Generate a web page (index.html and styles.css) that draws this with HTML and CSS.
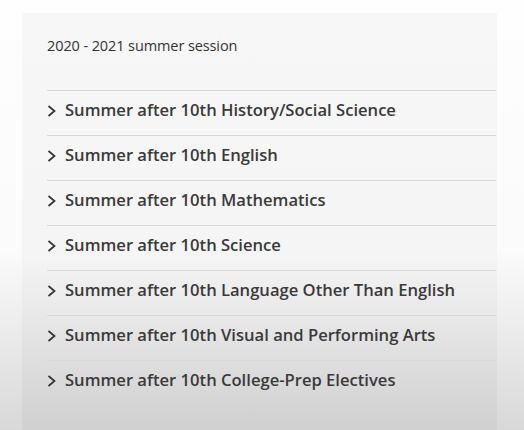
FILE: index.html
```html
<!DOCTYPE html>
<html lang="en">
<head>
    <meta charset="UTF-8">
    <title>Summer session</title>
    <link rel="stylesheet" href="styles.css">
</head>
<body>
    <div class="card">
        <h2 class="session-title">2020 - 2021 summer session</h2>
        <ul class="course-list">
            <li class="course"><svg class="chevron" width="10" height="14" viewBox="0 0 10 14"><path d="M1.5 2 L7.5 7 L1.5 12" fill="none" stroke="#333" stroke-width="1.7"/></svg>Summer after 10th History/Social Science</li>
            <li class="course"><svg class="chevron" width="10" height="14" viewBox="0 0 10 14"><path d="M1.5 2 L7.5 7 L1.5 12" fill="none" stroke="#333" stroke-width="1.7"/></svg>Summer after 10th English</li>
            <li class="course"><svg class="chevron" width="10" height="14" viewBox="0 0 10 14"><path d="M1.5 2 L7.5 7 L1.5 12" fill="none" stroke="#333" stroke-width="1.7"/></svg>Summer after 10th Mathematics</li>
            <li class="course"><svg class="chevron" width="10" height="14" viewBox="0 0 10 14"><path d="M1.5 2 L7.5 7 L1.5 12" fill="none" stroke="#333" stroke-width="1.7"/></svg>Summer after 10th Science</li>
            <li class="course"><svg class="chevron" width="10" height="14" viewBox="0 0 10 14"><path d="M1.5 2 L7.5 7 L1.5 12" fill="none" stroke="#333" stroke-width="1.7"/></svg>Summer after 10th Language Other Than English</li>
            <li class="course"><svg class="chevron" width="10" height="14" viewBox="0 0 10 14"><path d="M1.5 2 L7.5 7 L1.5 12" fill="none" stroke="#333" stroke-width="1.7"/></svg>Summer after 10th Visual and Performing Arts</li>
            <li class="course"><svg class="chevron" width="10" height="14" viewBox="0 0 10 14"><path d="M1.5 2 L7.5 7 L1.5 12" fill="none" stroke="#333" stroke-width="1.7"/></svg>Summer after 10th College-Prep Electives</li>
        </ul>
    </div>
</body>
</html>
```

FILE: styles.css
```css
html, body {
    height: 100%;
}
body {
    margin: 0;
    font-family: 'Open Sans', sans-serif;
    background: linear-gradient(to bottom, #fefefe 0%, #fbfbfb 58%, #d8d8d8 100%);
    padding-top: 13px;
    box-sizing: border-box;
    overflow: hidden;
}
.card {
    margin-left: 22px;
    width: 475px;
    height: 430px;
    padding: 24px 1px 0 25px;
    box-sizing: border-box;
    background: linear-gradient(to bottom, #f7f7f7 0%, #f5f5f5 56%, #cdcdcd 100%);
}
.session-title {
    margin: 0;
    font-size: 14.5px;
    font-weight: 400;
    color: #333;
    line-height: 18px;
    height: 53px;
    letter-spacing: -0.1px;
}
.course-list {
    list-style: none;
    margin: 0;
    padding: 0;
}
.course {
    display: flex;
    align-items: center;
    height: 45px;
    padding-bottom: 8px;
    box-sizing: border-box;
    border-top: 1px solid #d9d9d9;
    font-size: 16.6px;
    font-weight: 600;
    color: #3a3a3a;
}
.chevron {
    margin-right: 8px;
    margin-top: 4px;
    flex-shrink: 0;
}
```
